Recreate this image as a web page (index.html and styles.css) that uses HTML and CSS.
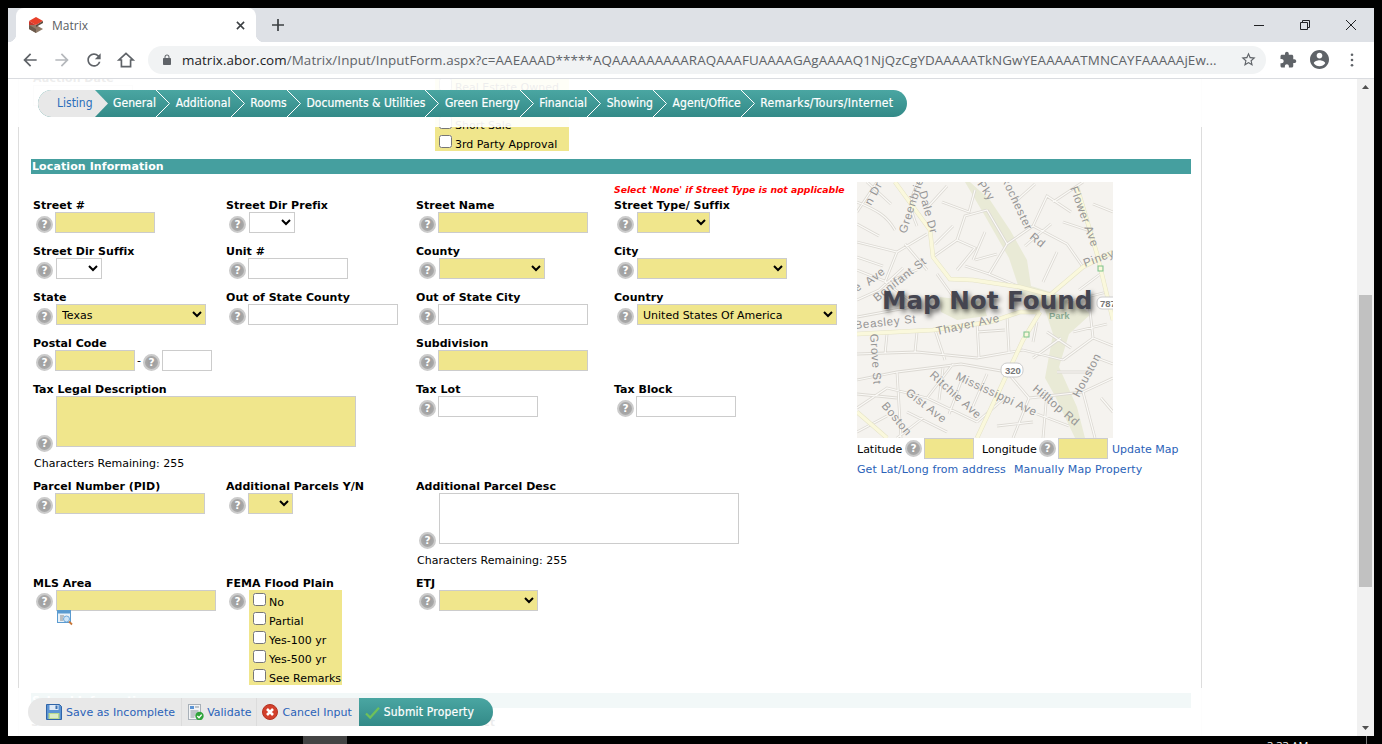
FILE: index.html
```html
<!DOCTYPE html>
<html lang="en">
<head>
<meta charset="utf-8">
<title>Matrix</title>
<link rel="stylesheet" href="styles.css">
</head>
<body>
<div class="window">
  <div class="tabstrip">
    <div class="tab">
      <svg class="favicon" viewBox="0 0 16 16"><polygon points="8,0 15,4 8,8 1,4" fill="#e8402a"/><polygon points="1,4 8,8 1,8" fill="#c9352a"/><polygon points="1,8 8,8 15,12 8,16 1,12" fill="#8f7a68"/><polygon points="1,8 8,12 8,16 1,12" fill="#6b5a4c"/><polygon points="8,8 15,4 15,6 8,10" fill="#5c4c40"/></svg>
      <span class="tab-title">Matrix</span>
      <svg class="tab-close" viewBox="0 0 10 10"><path d="M1 1l8 8M9 1l-8 8" stroke="#3c4043" stroke-width="1.7" fill="none"/></svg>
    </div>
    <svg class="newtab" viewBox="0 0 12 12"><path d="M6 0v12M0 6h12" stroke="#3c4043" stroke-width="1.7" fill="none"/></svg>
    <div class="winctl">
      <svg viewBox="0 0 10 10"><path d="M0 5.5h10" stroke="#202124" fill="none"/></svg>
      <svg viewBox="0 0 10 10"><path d="M.5 2.5h7v7h-7zM2.5 2.5v-2h7v7h-2" stroke="#202124" fill="none"/></svg>
      <svg viewBox="0 0 10 10"><path d="M0 0l10 10M10 0L0 10" stroke="#202124" fill="none"/></svg>
    </div>
  </div>
  <div class="toolbar">
    <svg class="tb-ico back" viewBox="0 0 24 24"><path d="M20 11H7.83l5.59-5.59L12 4l-8 8 8 8 1.41-1.41L7.83 13H20v-2z"/></svg>
    <svg class="tb-ico fwd" viewBox="0 0 24 24"><path d="M12 4l-1.41 1.41L16.17 11H4v2h12.17l-5.58 5.59L12 20l8-8z"/></svg>
    <svg class="tb-ico" viewBox="0 0 24 24"><path d="M17.65 6.35A7.958 7.958 0 0 0 12 4c-4.42 0-7.99 3.58-7.99 8s3.57 8 7.99 8c3.73 0 6.84-2.55 7.73-6h-2.08A5.99 5.99 0 0 1 12 18c-3.31 0-6-2.69-6-6s2.69-6 6-6c1.66 0 3.14.69 4.22 1.78L13 11h7V4l-2.35 2.35z"/></svg>
    <svg class="tb-ico" viewBox="0 0 24 24"><path d="M12 4L3.5 12H6.500v8h11v-8h3z" fill="none" stroke="#5f6368" stroke-width="2" stroke-linejoin="miter"/></svg>
    <div class="omnibox">
      <svg class="lock" viewBox="0 0 24 24"><path d="M18 8h-1V6c0-2.76-2.24-5-5-5S7 3.240 7 6v2H6c-1.100 0-2 .9-2 2v10c0 1.100.9 2 2 2h12c1.100 0 2-.9 2-2V10c0-1.100-.9-2-2-2zM9 6c0-1.660 1.340-3 3-3s3 1.340 3 3v2H9V6z"/></svg>
      <span class="url"><b>matrix.abor.com</b>/Matrix/Input/InputForm.aspx?c=AAEAAAD*****AQAAAAAAAAARAQAAAFUAAAAGAgAAAAQ1NjQzCgYDAAAAATkNGwYEAAAAATMNCAYFAAAAAjEw...</span>
      <svg class="star" viewBox="0 0 24 24"><path d="M22 9.240l-7.190-.62L12 2 9.190 8.630 2 9.240l5.460 4.730L5.820 21 12 17.270 18.180 21l-1.630-7.030L22 9.240zM12 15.400l-3.760 2.270 1-4.280-3.320-2.880 4.380-.38L12 6.100l1.710 4.040 4.380.38-3.320 2.880 1 4.280L12 15.400z"/></svg>
    </div>
    <svg class="tb-ext" viewBox="0 0 24 24"><path d="M20.500 11H19V7c0-1.100-.9-2-2-2h-4V3.500C13 2.120 11.880 1 10.500 1S8 2.120 8 3.500V5H4c-1.100 0-1.990.9-1.990 2v3.800H3.500c1.490 0 2.700 1.210 2.700 2.700s-1.210 2.700-2.700 2.700H2V20c0 1.100.9 2 2 2h3.800v-1.500c0-1.490 1.210-2.700 2.700-2.700 1.490 0 2.700 1.210 2.700 2.700V22H17c1.100 0 2-.9 2-2v-4h1.500c1.380 0 2.500-1.120 2.500-2.500S21.880 11 20.500 11z"/></svg>
    <svg class="tb-prof" viewBox="2 2 20 20"><path d="M12 2C6.480 2 2 6.480 2 12s4.480 10 10 10 10-4.480 10-10S17.520 2 12 2zm0 3c1.660 0 3 1.340 3 3s-1.340 3-3 3-3-1.340-3-3 1.340-3 3-3zm0 14.200c-2.500 0-4.710-1.280-6-3.220.03-1.990 4-3.080 6-3.080 1.990 0 5.970 1.090 6 3.080-1.290 1.940-3.500 3.220-6 3.220z"/></svg>
    <svg class="tb-dots" viewBox="0 0 4 16"><circle cx="2" cy="2" r="1.500"/><circle cx="2" cy="8" r="1.500"/><circle cx="2" cy="14" r="1.500"/></svg>
  </div>

  <div class="viewport">
    <div class="main">
      <div class="panel">
        <div class="top-row">
          <div class="ghost-field">
            <label class="lbl">Auction Date</label>
            <input class="inp w100" type="text">
          </div>
          <div class="checks w134">
            <label class="chk"><input type="checkbox">Real Estate Owned</label>
            <div class="chk"></div>
            <label class="chk"><input type="checkbox">Short Sale</label>
            <label class="chk"><input type="checkbox">3rd Party Approval</label>
          </div>
        </div>

        <div class="section">Location Information</div>

        <div class="form-row">
          <div class="form-grid">
            <div class="note">Select 'None' if Street Type is not applicable</div>

            <div class="field"><label class="lbl">Street #</label><div class="ctl"><span class="help"></span><input class="inp req w100" type="text"></div></div>
            <div class="field"><label class="lbl">Street Dir Prefix</label><div class="ctl"><span class="help"></span><select class="sel w46"><option></option></select></div></div>
            <div class="field"><label class="lbl">Street Name</label><div class="ctl"><span class="help"></span><input class="inp req w150" type="text"></div></div>
            <div class="field"><label class="lbl">Street Type/ Suffix</label><div class="ctl"><span class="help"></span><select class="sel req w73"><option></option></select></div></div>

            <div class="field"><label class="lbl">Street Dir Suffix</label><div class="ctl"><span class="help"></span><select class="sel w46"><option></option></select></div></div>
            <div class="field"><label class="lbl">Unit #</label><div class="ctl"><span class="help"></span><input class="inp w100" type="text"></div></div>
            <div class="field"><label class="lbl">County</label><div class="ctl"><span class="help"></span><select class="sel req w106"><option></option></select></div></div>
            <div class="field"><label class="lbl">City</label><div class="ctl"><span class="help"></span><select class="sel req w150"><option></option></select></div></div>

            <div class="field"><label class="lbl">State</label><div class="ctl"><span class="help"></span><select class="sel req w150"><option>Texas</option></select></div></div>
            <div class="field"><label class="lbl">Out of State County</label><div class="ctl"><span class="help"></span><input class="inp w150" type="text"></div></div>
            <div class="field"><label class="lbl">Out of State City</label><div class="ctl"><span class="help"></span><input class="inp w150" type="text"></div></div>
            <div class="field"><label class="lbl">Country</label><div class="ctl"><span class="help"></span><select class="sel req w200"><option>United States Of America</option></select></div></div>

            <div class="field span2"><label class="lbl">Postal Code</label><div class="ctl"><span class="help"></span><input class="inp req w80" type="text"><span class="dash">-</span><span class="help"></span><input class="inp w50" type="text"></div></div>
            <div class="field span2"><label class="lbl">Subdivision</label><div class="ctl"><span class="help"></span><input class="inp req w150" type="text"></div></div>

            <div class="field span2">
              <label class="lbl">Tax Legal Description</label>
              <div class="ctl tall"><span class="help"></span><textarea class="area req"></textarea></div>
              <div class="remain">Characters Remaining: 255</div>
            </div>
            <div class="field"><label class="lbl">Tax Lot</label><div class="ctl"><span class="help"></span><input class="inp w100" type="text"></div></div>
            <div class="field"><label class="lbl">Tax Block</label><div class="ctl"><span class="help"></span><input class="inp w100" type="text"></div></div>

            <div class="field"><label class="lbl">Parcel Number (PID)</label><div class="ctl"><span class="help"></span><input class="inp req w150" type="text"></div></div>
            <div class="field"><label class="lbl">Additional Parcels Y/N</label><div class="ctl"><span class="help"></span><select class="sel req w45"><option></option></select></div></div>
            <div class="field span2">
              <label class="lbl">Additional Parcel Desc</label>
              <div class="ctl tall"><span class="help"></span><textarea class="area"></textarea></div>
              <div class="remain">Characters Remaining: 255</div>
            </div>

            <div class="field">
              <label class="lbl">MLS Area</label>
              <div class="ctl top"><span class="help"></span>
                <div class="stack">
                  <input class="inp req w160" type="text">
                  <svg class="lookup" viewBox="0 0 16 16"><rect x=".5" y=".5" width="13" height="12" fill="#e8f1f8" stroke="#5b9bd0"/><rect x="1" y="1" width="12" height="2.500" fill="#5b9bd0"/><path d="M3 6h4M3 8h3M3 10h3" stroke="#8a8a8a" fill="none"/><circle cx="9.500" cy="9" r="3" fill="#cfe6f8" stroke="#6fa8d8"/><path d="M12 11.500l3 3" stroke="#c9783a" stroke-width="1.800" fill="none"/></svg>
                </div>
              </div>
            </div>
            <div class="field">
              <label class="lbl">FEMA Flood Plain</label>
              <div class="ctl top"><span class="help"></span>
                <div class="checks fema">
                  <label class="chk"><input type="checkbox">No</label>
                  <label class="chk"><input type="checkbox">Partial</label>
                  <label class="chk"><input type="checkbox">Yes-100 yr</label>
                  <label class="chk"><input type="checkbox">Yes-500 yr</label>
                  <label class="chk"><input type="checkbox">See Remarks</label>
                </div>
              </div>
            </div>
            <div class="field span2"><label class="lbl">ETJ</label><div class="ctl top"><span class="help"></span><select class="sel req w99"><option></option></select></div></div>
          </div>

          <div class="map-col">
            <div class="map">
              <svg class="map-img" viewBox="0 0 256 256">
                <defs>
                  <path id="streets" d="M0 20C20 28 30 34 38 48M20 0L0 30M62 0C50 18 54 30 60 44M0 60L40 70 70 52M40 70L28 100M0 88L30 100 60 88M28 100L60 124M76 75L100 58 118 66 100 88M100 58L108 34 130 28M85 20L112 30 118 8M130 28L150 62 176 44M150 62L132 92 163 105M132 92L108 84M176 44L210 62 226 85M176 44L190 14 214 30M196 20L226 0M200 70L186 100M0 172L60 170 120 176 166 168M0 198L40 190 104 182 150 190M40 190L44 256M78 148L88 178M120 140L122 176M150 134L152 170M166 168L206 178M150 190L172 216 226 210M0 226L30 206 70 216 120 240M70 216L96 182M120 240L150 214M172 216L156 256M206 178L236 156 256 164M236 156L232 120M226 210L256 196M226 210L238 256M216 150L250 142M190 210L186 256M0 118L22 108 46 86M60 124L0 135M256 30L236 22M100 120L80 92M10 0L34 22M0 42L22 54M48 62L70 88M0 75L26 84M90 4L70 26M96 44L78 62M116 78L128 50M140 72L118 78M158 20L178 2M168 64L194 42M206 40L236 50M246 90L222 108M176 160L180 140M190 150L214 166M176 176L204 156M120 150L148 148M60 150L58 170M30 152L28 172M0 212L40 216M86 186L82 218M104 200L92 232M130 192L116 224M0 250L30 234M50 230L90 250M180 232L212 244M200 190L236 190M240 176L256 182M244 216L256 230M66 236L40 256M140 244L176 240M210 120L250 110" fill="none"/>
                </defs>
                <rect width="256" height="256" fill="#f5f3ef"/>
                <path d="M113 0L133 18 153 48 170 78 174 104 210 115 234 132 212 152 202 185 220 225 228 256 218 256 198 214 188 196 196 152 188 128 164 112 152 76 128 34 108 0ZM83 115L126 120 130 134 100 138 84 130Z" fill="#e9ead6"/>
                <use href="#streets" stroke="#dcd9d3" stroke-width="2.800"/>
                <use href="#streets" stroke="#fbfaf7" stroke-width="1.200"/>
                <path d="M38 0L73 48 76 75 93 97 116 98 163 105 193 113 226 85 256 70M0 152L76 148 133 140 163 130 183 130M120 256L166 158 183 130M220 5L240 72 256 138M0 230L30 256" fill="none" stroke="#e4e2c6" stroke-width="4.400"/>
                <path d="M38 0L73 48 76 75 93 97 116 98 163 105 193 113 226 85 256 70M0 152L76 148 133 140 163 130 183 130M120 256L166 158 183 130M220 5L240 72 256 138M0 230L30 256" fill="none" stroke="#faf8dc" stroke-width="3.400"/>
                <g class="map-labels">
                  <text transform="translate(14 24) rotate(-62)">n Dr</text>
                  <text transform="translate(49 52) rotate(-72)">Greenbrier</text>
                  <text transform="translate(62 10) rotate(75)">Dale Dr</text>
                  <text transform="translate(120 2) rotate(55)">Pky</text>
                  <text transform="translate(144 -4) rotate(65)">Rochester</text>
                  <text transform="translate(172 56) rotate(40)">Rd</text>
                  <text transform="translate(213 6) rotate(70)">Flower Ave</text>
                  <text transform="translate(228 85) rotate(-20)">Piney</text>
                  <text transform="translate(12 104) rotate(-38)">Ave</text>
                  <text transform="translate(20 120) rotate(-38)">Bonifant St</text>
                  <text transform="translate(0 110) rotate(-35)">e</text>
                  <text transform="translate(-2 147) rotate(-6)">Beasley St</text>
                  <text transform="translate(80 153) rotate(-12)">Thayer Ave</text>
                  <text transform="translate(13 152) rotate(86)">Grove St</text>
                  <text transform="translate(98 197) rotate(25)">Mississippi Ave</text>
                  <text transform="translate(72 194) rotate(42)">Ritchie Ave</text>
                  <text transform="translate(48 212) rotate(38)">Gist Ave</text>
                  <text transform="translate(24 224) rotate(50)">Boston</text>
                  <text transform="translate(175 208) rotate(40)">Hilltop Rd</text>
                  <text transform="translate(222 216) rotate(-62)">Houston</text>
                </g>
                <text class="map-park" x="192" y="137">Park</text>
                <rect x="241" y="84" width="5" height="5" fill="none" stroke="#7cc48a"/>
                <rect x="167" y="150" width="5" height="5" fill="none" stroke="#7cc48a"/>
                <rect x="144" y="181" width="22" height="14" rx="6" fill="#fff" stroke="#ccc"/>
                <text class="map-shield" x="148" y="192">320</text>
                <rect x="240" y="115" width="24" height="12" rx="5" fill="#fff" stroke="#ccc"/>
                <text class="map-shield" x="243" y="125">787</text>
              </svg>
              <div class="map-msg">Map Not Found</div>
            </div>
            <div class="latlong">
              <span class="ll-text">Latitude</span><span class="help"></span><input class="inp req w50" type="text">
              <span class="ll-text lon">Longitude</span><span class="help"></span><input class="inp req w50" type="text">
              <a class="link upd">Update Map</a>
            </div>
            <div class="map-links"><a class="link">Get Lat/Long from address</a><a class="link">Manually Map Property</a></div>
          </div>
        </div>

        <div class="section next">School Information</div>
        <div class="school-row">
          <label class="lbl">School District</label>
          <label class="lbl">Out of State School District</label>
        </div>
      </div>

      <div class="wizard-band">
        <nav class="wizard">
          <a class="step-on">Listing</a>
          <svg class="tip" viewBox="0 0 13 27"><polygon points="0,0 13,13.500 0,27" fill="#e8e8e8"/></svg>
          <a class="step">General</a><svg class="chev" viewBox="0 0 14 27"><path d="M0 0l13.500 13.500L0 27" /></svg>
          <a class="step">Additional</a><svg class="chev" viewBox="0 0 14 27"><path d="M0 0l13.500 13.500L0 27" /></svg>
          <a class="step">Rooms</a><svg class="chev" viewBox="0 0 14 27"><path d="M0 0l13.500 13.500L0 27" /></svg>
          <a class="step">Documents &amp; Utilities</a><svg class="chev" viewBox="0 0 14 27"><path d="M0 0l13.500 13.500L0 27" /></svg>
          <a class="step">Green Energy</a><svg class="chev" viewBox="0 0 14 27"><path d="M0 0l13.500 13.500L0 27" /></svg>
          <a class="step">Financial</a><svg class="chev" viewBox="0 0 14 27"><path d="M0 0l13.500 13.500L0 27" /></svg>
          <a class="step">Showing</a><svg class="chev" viewBox="0 0 14 27"><path d="M0 0l13.500 13.500L0 27" /></svg>
          <a class="step">Agent/Office</a><svg class="chev" viewBox="0 0 14 27"><path d="M0 0l13.500 13.500L0 27" /></svg>
          <a class="step step-last">Remarks/Tours/Internet</a>
        </nav>
      </div>

      <div class="action-band">
        <div class="actions">
          <a class="act">
            <svg class="act-ico" viewBox="0 0 16 16"><path d="M.5.5h13l2 2v13H.500z" fill="#5b93d3" stroke="#2f64a8"/><rect x="3.500" y="1" width="9" height="5" fill="#dfeaf6"/><rect x="9.500" y="1.500" width="2" height="3.500" fill="#3a6fb0"/><rect x="2.500" y="9" width="11" height="6" fill="#b9d98f"/><path d="M4 11h8M4 13h8" stroke="#fff" fill="none"/></svg>
            <span>Save as Incomplete</span>
          </a>
          <a class="act">
            <svg class="act-ico" viewBox="0 0 16 16"><rect x=".5" y=".5" width="12" height="15" fill="#f2f4f6" stroke="#a8b0b8"/><rect x="2" y="2" width="4" height="3" fill="#5b93d3"/><path d="M7 3h4M2.500 7h8M2.500 9h8M2.500 11h5M2.500 13h4" stroke="#8b959f" fill="none"/><circle cx="11.500" cy="12" r="4.200" fill="#2fa33a"/><path d="M9.300 12l1.700 1.800 2.700-3.200" stroke="#fff" stroke-width="1.400" fill="none"/></svg>
            <span>Validate</span>
          </a>
          <a class="act">
            <svg class="act-ico" viewBox="0 0 16 16"><circle cx="8" cy="8" r="7.500" fill="#d2402c" stroke="#b33322"/><path d="M5 5l6 6M11 5l-6 6" stroke="#fff" stroke-width="2.600" fill="none"/></svg>
            <span>Cancel Input</span>
          </a>
          <a class="act-submit">
            <svg class="submit-ico" viewBox="0 0 16 14"><path d="M1 8l4.500 4.500L15 2" stroke="#6fc05a" stroke-width="2.400" fill="none"/></svg>
            <span>Submit Property</span>
          </a>
        </div>
      </div>
    </div>

    <div class="scrollbar">
      <svg class="sb-arrow" viewBox="0 0 17 17"><polygon points="8.500,6 12,10 5,10" fill="#505050"/></svg>
      <div class="sb-track"><div class="sb-thumb"></div></div>
      <svg class="sb-arrow" viewBox="0 0 17 17"><polygon points="5,7 12,7 8.500,11" fill="#505050"/></svg>
    </div>
  </div>
</div>
<div class="taskbar">
  <div class="task-btn"></div>
  <div class="task-clock">3:33 AM</div>
  <div class="task-line"></div>
</div>
</body>
</html>
```
FILE: styles.css
```css
* { box-sizing: border-box; }
html, body { margin: 0; height: 744px; overflow: hidden; }
body { background: #000; display: flex; flex-direction: column; font-family: "DejaVu Sans", Verdana, sans-serif; font-size: 11px; color: #000; }

.window { margin: 8px 8px 0; height: 728px; width: 1366px; display: flex; flex-direction: column; background: #fff; overflow: hidden; }

/* Browser chrome */
.tabstrip { height: 34px; flex: none; background: #dee1e6; display: flex; align-items: center; }
.tab { position: relative; margin-left: 8px; width: 240px; height: 34px; background: #fff; border-radius: 8px 8px 0 0; display: flex; align-items: center; padding-left: 12px; }
.tab::before, .tab::after { content: ""; position: absolute; bottom: 0; width: 8px; height: 8px; }
.tab::before { left: -8px; background: radial-gradient(circle at 0 0, transparent 8px, #fff 8.5px); }
.tab::after { right: -8px; background: radial-gradient(circle at 100% 0, transparent 8px, #fff 8.5px); }
.favicon { width: 16px; height: 16px; flex: none; }
.tab-title { margin-left: 8px; font: 12px "Open Sans", sans-serif; color: #5a5e63; flex: 1; }
.tab-close { width: 9px; height: 9px; margin-right: 11px; }
.newtab { width: 12px; height: 12px; margin-left: 16px; }
.winctl { margin-left: auto; display: flex; gap: 36px; margin-right: 18px; align-items: center; }
.winctl svg { width: 10px; height: 10px; }

.toolbar { height: 37px; flex: none; background: #fff; border-bottom: 1px solid #dadce0; display: flex; align-items: center; padding: 0 0 1px 12px; }
.tb-ico { width: 20px; height: 20px; margin-right: 12px; fill: #5f6368; flex: none; }
.tb-ico.fwd { fill: #b5b8bc; }
.omnibox { width: 1118px; height: 28px; border-radius: 14px; background: #f1f3f4; display: flex; align-items: center; padding-left: 13px; flex: none; }
.lock { width: 12px; height: 12px; fill: #5f6368; flex: none; }
.url { margin-left: 9px; width: 1044px; white-space: nowrap; overflow: hidden; font: 13.4px "Open Sans", sans-serif; letter-spacing: .08px; color: #5f6368; }
.url b { font-weight: 400; color: #202124; }
.star { width: 17px; height: 17px; fill: #5f6368; margin-left: auto; margin-right: 9px; flex: none; }
.tb-ext { width: 18px; height: 18px; fill: #5f6368; margin-left: 13px; flex: none; }
.tb-prof { width: 19px; height: 19px; fill: #5f6368; margin-left: 13px; flex: none; }
.tb-dots { width: 4px; height: 14px; fill: #5f6368; margin-left: 21px; flex: none; }

/* Page */
.viewport { flex: 1; display: flex; min-height: 0; }
.main { flex: 1; position: relative; overflow: hidden; }
.panel { margin-left: 10px; width: 1184px; border-left: 1px solid #ddd; border-right: 1px solid #ddd; height: 100%; overflow: hidden; }

.top-row { height: 72px; display: grid; grid-template-columns: 402px auto; padding-left: 14px; justify-content: start; overflow: hidden; }
.ghost-field { margin-top: -8px; }
.checks { background: #f0e68c; }
.w134 { width: 134px; margin-top: -4px; height: 76px; }
.chk { display: flex; align-items: center; height: 19px; padding-left: 4px; padding-top: 5px; white-space: nowrap; }
.chk input { margin: 0 3px 0 0; width: 13px; height: 13px; flex: none; transform: translateY(-3px); }

.section { margin: 8px 0 0 12px; width: 1160px; height: 15px; background: #459f9f; color: #fff; font-weight: 700; font-size: 11px; line-height: 14px; letter-spacing: .1px; padding: 1px 0 0 1px; }
.section.next { margin-top: 0; }

.form-row { display: flex; padding: 8px 0 0 14px; }
.form-grid { flex: none; display: grid; grid-template-columns: 193px 190px 198px 243px; grid-template-rows: 16px 46px 46px 46px 46px 97px 97px 117px; }
.note { grid-column: 4; color: #f00; font-weight: 700; font-style: italic; font-size: 9.25px; line-height: 16px; white-space: nowrap; }
.field { min-width: 0; }
.span2 { grid-column: span 2; }
.lbl { display: block; height: 14px; font-weight: 700; font-size: 11px; line-height: 16px; letter-spacing: .03px; white-space: nowrap; }
.ctl { display: flex; align-items: center; gap: 2px; padding-left: 3px; height: 21px; }
.ctl.tall { align-items: flex-end; height: 51px; }
.ctl.tall .help { margin: 0 0 -5px; }
.ctl.top { align-items: flex-start; height: auto; }

.help { display: block; flex: none; width: 17px; height: 17px; margin-top: 3px; border-radius: 50%; border: 2px solid #cbcbcb; background: radial-gradient(circle, #a0a0a0 30%, #b0b0b0); color: #fff; font: 700 10.5px/13px "DejaVu Sans", sans-serif; text-align: center; }
.help::before { content: "?"; }

.inp { display: block; height: 21px; border: 1px solid #ccc; background: #fff; padding: 0 2px; margin: 0; font: 11px "DejaVu Sans", sans-serif; border-radius: 0; flex: none; }
.sel { display: block; height: 21px; border: 1px solid #ccc; background-color: #fff; margin: 0 0 0 1px; padding: 1px 0 0 1px; font: 11px "DejaVu Sans", sans-serif; border-radius: 0; flex: none; color: #000; }
.area { display: block; width: 300px; height: 51px; border: 1px solid #ccc; background: #fff; margin: 0 0 0 1px; padding: 2px; resize: none; border-radius: 0; flex: none; }
.req { background-color: #f0e68c; }
.w45 { width: 45px; margin-left: 0; } .w46 { width: 46px; } .w50 { width: 50px; } .w73 { width: 73px; }
.w80 { width: 80px; } .w99 { width: 99px; } .w100 { width: 100px; } .w106 { width: 106px; }
.w150 { width: 150px; } .w160 { width: 160px; } .w200 { width: 200px; }
.dash { width: 6px; text-align: center; margin: 0 -1px 0 -1px; }
.remain { margin: 10px 0 0 1px; line-height: 14px; font-size: 11px; }
.stack { margin-left: 1px; display: flex; flex-direction: column; }
.lookup { display: block; width: 16px; height: 16px; margin: -1px 0 0 1px; }
.fema { margin-left: 1px; width: 93px; height: 95px; }

/* Map */
.map-col { flex: none; width: 320px; }
.map { position: relative; width: 256px; height: 256px; }
.map-img { display: block; width: 256px; height: 256px; }
.map-labels text { font: 11.5px "Liberation Sans", sans-serif; fill: #959595; letter-spacing: .7px; }
.map-park { font: 700 9.500px "Liberation Sans", sans-serif; fill: #8fb098; }
.map-shield { font: 700 9.500px "Liberation Sans", sans-serif; fill: #777; }
.map-msg { position: absolute; left: 25px; top: 104px; font: 700 24.600px/30px "DejaVu Sans", sans-serif; color: #454550; white-space: nowrap; text-shadow: 2px 3px 5px rgba(0, 0, 0, .65); }
.latlong { display: flex; align-items: center; height: 21px; }
.latlong .help { margin: 0 2px 0 3px; }
.ll-text { width: 45px; white-space: nowrap; padding-top: 2px; }
.ll-text.lon { width: 54px; margin-left: 8px; }
.link { color: #2a62b8; white-space: nowrap; font-size: 11px; }
.upd { margin-left: 4px; padding-top: 2px; }
.map-links { display: flex; gap: 8px; margin-top: 4px; line-height: 14px; letter-spacing: .1px; }
.school-row { display: grid; grid-template-columns: 293px auto; justify-content: start; padding: 7px 0 0 12px; }

/* Overlays */
.wizard-band { position: absolute; left: 0; right: 0; top: 0; height: 48px; padding: 11px 0 0 30px; background: rgba(255, 255, 255, .93); }
.wizard { width: 869px; height: 27px; display: flex; align-items: center; border-radius: 14px; overflow: hidden; background: linear-gradient(#4aa6a2, #338a88); color: #fff; font: 400 12px/27px "DejaVu Sans Condensed", "DejaVu Sans", sans-serif; letter-spacing: .07px; -webkit-text-stroke: .2px #fff; }
.wizard a { white-space: nowrap; }
.step-on { width: 57px; height: 27px; padding-left: 19px; background: #e8e8e8; color: #2a6ebb; letter-spacing: 0; -webkit-text-stroke: 0; flex: none; }
.tip { width: 13px; height: 27px; flex: none; margin-right: 5px; }
.step { flex: none; }
.step-last { letter-spacing: .36px; }
.chev { width: 14px; height: 27px; flex: none; margin-right: 5.6px; fill: none; stroke: #fff; }

.action-band { position: absolute; left: 0; right: 0; bottom: 0; height: 48px; padding: 10px 0 0 20px; background: rgba(255, 255, 255, .93); }
.actions { display: flex; width: 465px; height: 28px; border-radius: 14px; overflow: hidden; background: #e8e8e8; color: #2a62b8; }
.act { display: flex; align-items: center; padding: 0 5px; border-left: 1px solid #dcdcdc; flex: none; }
.act:first-child { border-left: 0; padding: 0 6px 0 18px; letter-spacing: .06px; }
.act:nth-child(2) { padding-left: 6px; }
.act:nth-child(2) .act-ico { margin-right: 3px; }
.act:nth-child(3) { padding-right: 7px; }
.act-ico { width: 16px; height: 16px; margin-right: 4px; flex: none; }
.act-submit { flex: 1; display: flex; align-items: center; padding-left: 6px; background: linear-gradient(#4aa6a2, #338a88); color: #fff; font: 400 12px "DejaVu Sans Condensed", "DejaVu Sans", sans-serif; letter-spacing: .2px; -webkit-text-stroke: .2px #fff; }
.submit-ico { width: 15px; height: 13px; margin-right: 4px; flex: none; }

/* Scrollbar */
.scrollbar { width: 17px; flex: none; background: #f1f1f1; display: flex; flex-direction: column; }
.sb-arrow { width: 17px; height: 17px; flex: none; display: block; }
.sb-track { flex: 1; padding: 199px 2px 0; }
.sb-thumb { height: 292px; background: #c1c1c1; }

/* Under the window */
.taskbar { flex: 1; display: flex; overflow: hidden; }
.task-btn { margin-left: 303px; width: 44px; background: #444; }
.task-clock { margin-left: 920px; color: #fff; font: 11px/14px "Open Sans", sans-serif; padding-top: 3px; white-space: nowrap; width: 60px; }
.task-line { margin-left: 39px; width: 1px; background: #777; }
```
